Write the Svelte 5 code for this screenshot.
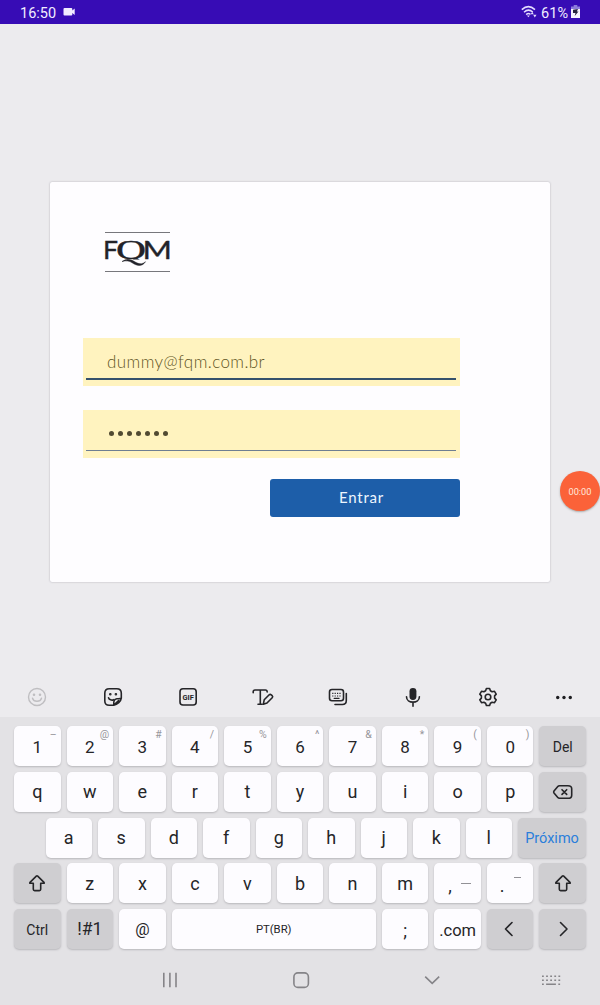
<script>
  const numbers = [
    ['1', '–'], ['2', '@'], ['3', '#'], ['4', '/'], ['5', '%'],
    ['6', '^'], ['7', '&'], ['8', '*'], ['9', '('], ['0', ')']
  ];
  const top = 'qwertyuiop'.split('');
  const home = 'asdfghjkl'.split('');
  const bottom = 'zxcvbnm'.split('');
  const dots = [0, 1, 2, 3, 4, 5, 6];
</script>

{#snippet shift()}
  <svg width="18" height="18" viewBox="0 0 18 18" class="line dark">
    <path d="M8.3 2.100q.7-.7 1.400 0l6.300 6.300q.7.900-.4.900H12.700v6q0 1.300-1.300 1.300H6.600q-1.300 0-1.300-1.300v-6H2.400q-1.100 0-.4-.9z" />
  </svg>
{/snippet}

<div class="screen">
  <header class="status">
    <div class="clock">
      <span>16:50</span>
      <svg width="12" height="10" viewBox="0 0 12 10"><path d="M1.500 1h6.800q1 0 1 1v1.500L11.700 1.500v6.500L9.300 6V7.800q0 .8-1 .8H1.500Q.5 8.600.5 7.600V2q0-1 1-1z" fill="#f1ecff" /></svg>
    </div>
    <div class="power">
      <svg width="16" height="14" viewBox="0 0 16 14" fill="none" stroke="#e4dcff" stroke-width="1.500">
        <path d="M.8 4.600Q7.300-1.400 14 4.600M3 7.200q4.300-4 8.800-.2M5.200 9.600q2-2 4.300-.3" />
        <path d="m6 10.500 1.400 1.800 1.400-1.800z" fill="#e4dcff" stroke="none" />
        <path d="m9.700 9.200 1.500-2.500 1.500 2.500zM12.200 9.700h3.300l-1.700 2.700z" fill="#e4dcff" stroke="none" />
      </svg>
      <span>61%</span>
      <svg width="9" height="14" viewBox="0 0 9 14"><path d="M2.700 0h3.600v1.500H9V5H0V1.500h2.700z" fill="#8d7bdc" /><path d="M0 4h9v9H0z" fill="#f5f2ff" /><path d="M2 4.800 7 4 5.800 6.500h1.700L3.700 11l.8-3H2z" fill="#26213f" /></svg>
    </div>
  </header>

  <main>
    <section class="card">
      <div class="logo">
        <svg width="67" height="42" viewBox="0 0 67 42">
          <clipPath id="bowl"><rect width="67" height="28.600" /></clipPath>
          <path d="M1 1.500h65M1 40.500h65" stroke="#77777c" stroke-width="1.200" />
          <g fill="#222329" font-family="Lato" stroke="#222329" stroke-width=".35">
            <text x="-1" y="28" font-size="24.500" textLength="15" lengthAdjust="spacingAndGlyphs">F</text>
            <text x="12" y="28" font-size="27" font-family="Liberation Serif" textLength="30" lengthAdjust="spacingAndGlyphs" clip-path="url(#bowl)">Q</text>
            <text x="38.500" y="28" font-size="24.500" textLength="29.500" lengthAdjust="spacingAndGlyphs">M</text>
          </g>
          <path d="M18 30.500q4.500-3.500 9.500-1.500c4 1.800 8.500 6.500 14 1.700-3.500 5.300-8.500 4.300-13 1.300-3-2-6-2.800-10.500-1.500z" fill="#222329" stroke="#222329" stroke-width=".5" />
        </svg>
      </div>
      <div class="field first"><span class="email">dummy@fqm.com.br</span></div>
      <div class="field second"><span class="dots">{#each dots as d (d)}<i></i>{/each}</span></div>
      <button class="enter">Entrar</button>
    </section>
    <div class="timer">00:00</div>
  </main>

  <nav class="tools">
    <svg width="20" height="20" viewBox="0 0 20 20" class="line faint"><circle cx="10" cy="10" r="8.500" /><path d="M5.500 11.200c1.200 4 7.800 4 9 0" /><circle cx="7" cy="7.700" r=".6" fill="#bfbec1" /><circle cx="13" cy="7.700" r=".6" fill="#bfbec1" /></svg>
    <svg width="20" height="20" viewBox="0 0 20 20" class="line dark"><path d="M10.800 18.200H6.200Q1.800 18.200 1.800 13.900V6.200Q1.800 1.800 6.200 1.800h7.600Q18.300 1.800 18.300 6.200v5c-.3 3-4 6.500-7.500 7-.4-3.200.4-6 3-6.400 1.500-.2 3.500.3 4.500-.8M10.800 18.200l4.800-4.500" /><path d="M5.500 10.700c.7 2.100 3.200 3 5.300 2" /><circle cx="7.300" cy="7.200" r=".5" fill="#252528" /><circle cx="12.900" cy="7.200" r=".5" fill="#252528" /></svg>
    <svg width="20" height="20" viewBox="0 0 20 20"><rect x="2" y="1.800" width="16.200" height="16.200" rx="3" class="line dark" /><text x="10.100" y="12.900" text-anchor="middle" font-size="8" font-weight="700" font-family="Roboto" textLength="11.400" lengthAdjust="spacingAndGlyphs" fill="#252528">GIF</text></svg>
    <svg width="24" height="20" viewBox="0 0 24 20" class="line dark"><path d="M2.200 5.800V4.700Q2.200 3 4 3h10.500q1.600 0 1.700 2M9.300 3v14.200M7 17.300h4.200" /><path d="m13.200 12.800 5-5q1-.9 2 0l1 .9q1 1 0 2L16 16l-3.700 1.300z" /></svg>
    <svg width="20" height="20" viewBox="0 0 20 20" class="line dark"><rect x="1.500" y="2.500" width="14" height="11.300" rx="2.500" /><path d="M18.300 6.500v7q0 4-4 4H7" /><path d="M4.200 6.400h9M4.200 9h9" stroke-dasharray="1.200 1.200" stroke-width="1.200" stroke-linecap="butt" class="flat" /><path d="M6.200 11.400h4.800" stroke-width="1.200" /></svg>
    <svg width="20" height="20" viewBox="0 0 20 20" class="line dark"><rect x="6.500" y=".9" width="6.900" height="12" rx="3.400" fill="#252528" stroke="none" /><path d="M3.500 9.700c0 7.200 12.900 7.200 12.900 0M10 15.200v4" /></svg>
    <svg width="20" height="20" viewBox="0 0 20 20" class="line dark"><circle cx="10" cy="10" r="2.800" /><path d="M8.400 1.500h3.200l.8 2.300 1.700 1 2.400-.5 1.700 2.800-1.600 1.800v2.200l1.600 1.800-1.700 2.800-2.400-.5-1.700 1-.8 2.300H8.400l-.8-2.300-1.700-1-2.400.5-1.700-2.800 1.600-1.800V8.900L1.800 7.100l1.700-2.800 2.400.5 1.700-1z" /></svg>
    <svg width="20" height="20" viewBox="0 0 20 20" fill="#1d1d20"><circle cx="3.700" cy="10.500" r="1.700" /><circle cx="10" cy="10.500" r="1.700" /><circle cx="16.300" cy="10.500" r="1.700" /></svg>
  </nav>

  <section class="keyboard">
    <div class="row">
      {#each numbers as [n, s] (n)}
        <div class="key number">{n}<small>{s}</small></div>
      {/each}
      <div class="key grey word">Del</div>
    </div>
    <div class="row">
      {#each top as k (k)}<div class="key">{k}</div>{/each}
      <div class="key grey">
        <svg width="22" height="18" viewBox="0 0 22 18" class="line dark"><path d="M7.500 2.700H16q3.700 0 3.700 3.100v6.400q0 3.100-3.700 3.100H7.500q-1.100 0-1.700-.7L2 10q-.7-1 0-2l3.800-4.600q.6-.7 1.700-.7zM10 6.700l4.700 4.700M14.700 6.700 10 11.400" /></svg>
      </div>
    </div>
    <div class="row home">
      {#each home as k (k)}<div class="key">{k}</div>{/each}
      <div class="key grey next">Próximo</div>
    </div>
    <div class="row">
      <div class="key grey">{@render shift()}</div>
      {#each bottom as k (k)}<div class="key">{k}</div>{/each}
      <div class="key punct comma">,<b class="mid"></b></div>
      <div class="key punct">.<b class="high"></b></div>
      <div class="key grey">{@render shift()}</div>
    </div>
    <div class="row">
      <div class="key grey word">Ctrl</div>
      <div class="key grey sym">!#1</div>
      <div class="key at">@</div>
      <div class="key space">PT(BR)</div>
      <div class="key semi">;</div>
      <div class="key com">.com</div>
      <div class="key grey"><svg width="18" height="18" viewBox="0 0 18 18" class="line dark"><path d="M11 2.500 4.500 9l6.500 6.500" /></svg></div>
      <div class="key grey"><svg width="18" height="18" viewBox="0 0 18 18" class="line dark"><path d="M6.500 2.500 13 9l-6.500 6.500" /></svg></div>
    </div>
  </section>

  <footer>
    <svg width="20" height="20" viewBox="0 0 20 20" class="nav"><path d="M3.800 2.700v14.600M9.900 2.700v14.600M16 2.700v14.600" /></svg>
    <svg width="20" height="20" viewBox="0 0 20 20" class="nav"><rect x="2.900" y="2.900" width="14.500" height="14.500" rx="4" /></svg>
    <svg width="20" height="20" viewBox="0 0 20 20" class="nav"><path d="m3.200 6.700 7 6.700 7-6.700" /></svg>
    <svg width="20" height="20" viewBox="0 0 20 20" class="nav"><path d="M1 6.300h18.500M1 10.200h18.500" stroke-dasharray="1.800 2.300" /><path d="M1 14.300h1.800M5.100 14.300h9.800M17.300 14.300h1.800" /></svg>
  </footer>
</div>

<style>
  :global(body) { margin: 0; }
  .screen {
    width: 600px; height: 1005px; overflow: hidden; display: flex; flex-direction: column;
    background: #ecebee; font-family: Roboto, "Noto Sans", sans-serif; color: #252528;
  }
  svg { display: block; flex: none; }
  .line { fill: none; stroke-width: 1.600; stroke-linecap: round; stroke-linejoin: round; }
  .flat { stroke-linecap: butt; }
  .dark { stroke: #252528; }
  .faint { stroke: #bfbec1; stroke-width: 1.400; }
  .status {
    height: 24px; flex: none; box-sizing: border-box; padding: 2px 20px 0; display: flex; justify-content: space-between;
    align-items: center; background: #370cb5; color: #f1ecff; font-size: 14.500px;
  }
  .clock, .power { display: flex; align-items: center; }
  .clock { gap: 7px; }
  .clock svg { margin-top: -2px; }
  .power { gap: 3px; }
  .power svg { margin-top: -2px; }
  .power span { margin-left: 1px; }
  main { height: 654px; flex: none; position: relative; display: flex; flex-direction: column; align-items: center; }
  .card {
    width: 500px; height: 400px; box-sizing: border-box; margin-top: 158px; padding: 49px 90px 0 33px;
    background: #fefdff; border-radius: 2px; box-shadow: 0 0 2px #aaa9b0; display: flex; flex-direction: column;
  }
  .logo { height: 42px; padding-left: 21px; }
  .field {
    height: 48px; flex: none; box-sizing: border-box; padding: 0 4px 0 3px; background: #fff3bf;
    display: flex; flex-direction: column; justify-content: flex-end;
  }
  .first { margin-top: 65px; }
  .second { margin-top: 24px; }
  .field span { display: flex; box-sizing: border-box; padding-left: 21px; }
  .email {
    height: 36px; margin-bottom: 6px; border-bottom: 2px solid #35516c; align-items: center;
    font: 300 17px Lato, sans-serif; color: #5f5525; letter-spacing: .42px;
  }
  .dots { height: 37px; margin-bottom: 7px; border-bottom: 1px solid #6e7e91; align-items: center; gap: 4px; padding-top: 3px; }
  .dots i { width: 5px; height: 5px; border-radius: 50%; background: #514a32; }
  .field .dots { padding-left: 23px; }
  .enter {
    width: 190px; height: 38px; margin: 21px 0 0; align-self: flex-end; flex: none; padding: 0 7px 2px 0; border: 0; border-radius: 3px;
    background: #1d5ea9; color: #edf6ff; font: 400 15px Lato, sans-serif; letter-spacing: .8px;
  }
  .timer {
    position: absolute; left: 560px; top: 447px; width: 40px; height: 40px; border-radius: 50%; background: #fb6239;
    display: flex; align-items: center; justify-content: center; color: #ffe8dc; font-size: 9.200px; box-shadow: 0 1px 2px #aaa;
  }
  .tools {
    height: 39px; flex: none; box-sizing: border-box; padding: 0 0 2px 1px; display: grid;
    grid-template-columns: repeat(8, 75.200px); justify-content: center; align-items: center; justify-items: center;
  }
  .keyboard {
    height: 238px; flex: none; box-sizing: border-box; padding: 9px 14px 0; background: #e3e2e5;
    display: flex; flex-direction: column; gap: 5.750px;
  }
  .row { display: grid; grid-template-columns: repeat(11, minmax(0, 1fr)); gap: 6px; height: 40px; flex: none; }
  .home { grid-template-columns: repeat(9, 46.500px) 1fr; padding-left: 31.500px; }
  .key {
    position: relative; display: flex; align-items: center; justify-content: center; box-sizing: border-box; border-radius: 5px;
    background: #fdfcff; box-shadow: 0 1px 2px #b8b7bb; font-size: 18px; white-space: nowrap;
  }
  .number { font-size: 17px; padding-top: 1px; }
  .key small { position: absolute; right: 4px; top: 2px; font-size: 10.500px; line-height: 13px; color: #97969b; }
  .grey { background: #cfced1; }
  .word { font-size: 14px; padding-top: 1px; }
  .next { font-size: 14.500px; color: #2a7edb; padding-top: 2px; }
  .sym { font-size: 17.500px; }
  .at { font-size: 16px; }
  .space { grid-column: span 4; font-size: 11.300px; }
  .semi { padding-top: 2px; }
  .com { font-size: 16.500px; padding-top: 2px; }
  .punct { padding-right: 16px; padding-top: 4px; }
  .comma { padding-right: 15px; }
  .punct b { position: absolute; height: 1px; background: #929196; }
  .mid { width: 10px; right: 10px; top: 20px; }
  .high { width: 7px; right: 12px; top: 14px; }
  footer {
    height: 50px; flex: none; background: #e3e2e5; display: grid; grid-template-columns: 131px 131px 131px 106px;
    padding-left: 104.500px; align-items: center; justify-items: center;
  }
  .nav { fill: none; stroke: #858488; stroke-width: 1.600; }
</style>
